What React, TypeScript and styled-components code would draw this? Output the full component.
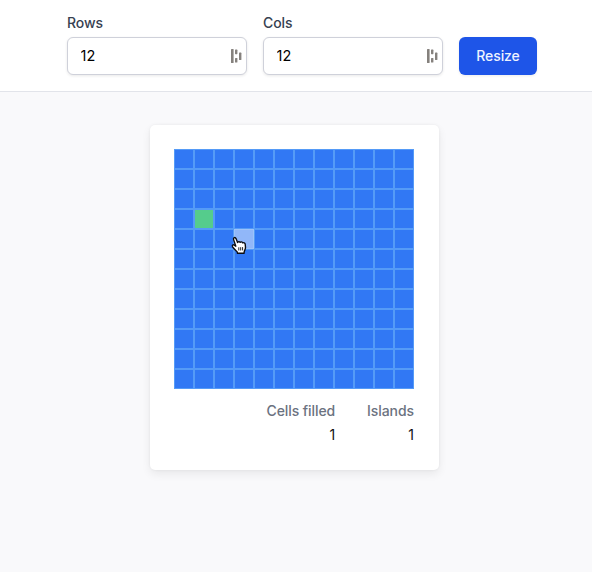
import React from "react";
import styled, { createGlobalStyle } from "styled-components";

const GlobalStyle = createGlobalStyle`
  *, *::before, *::after { box-sizing: border-box; }
  body {
    margin: 0;
    background: #f9f9fb;
    color: #161e2e;
    font-family: Inter, sans-serif;
    -webkit-font-smoothing: antialiased;
  }
`;

const Page = styled.div`
  display: flex;
  flex-direction: column;
  align-items: center;
  height: 572px;
  overflow: hidden;
`;

const Toolbar = styled.form`
  display: flex;
  align-items: flex-end;
  gap: 16px;
  width: 100%;
  height: 92px;
  padding: 0 55px 16px 67px;
  background: #fff;
  border-bottom: 1px solid #e2e4ea;
`;

const Field = styled.label`
  display: flex;
  flex-direction: column;
  gap: 4px;
  width: 180px;
`;

const FieldLabel = styled.span`
  font-size: 14px;
  font-weight: 500;
  line-height: 20px;
  letter-spacing: -0.08px;
  color: #374151;
`;

const InputBox = styled.span`
  display: flex;
  align-items: center;
  height: 38px;
  padding: 0 2px 0 12.5px;
  background: #fff;
  border: 1px solid #cfd1da;
  border-radius: 6px;
  box-shadow: 0 1px 3px rgba(0, 0, 0, 0.09);
`;

const NumberInput = styled.input`
  flex: 1;
  min-width: 0;
  padding: 0;
  border: 0;
  outline: 0;
  background: transparent;
  font: 400 14.5px/20px Inter, sans-serif;
  color: #000;
`;

const ResizeButton = styled.button`
  width: 78px;
  height: 38px;
  padding: 0;
  border: 0;
  border-radius: 6px;
  background: #1e55e8;
  color: #eef3ff;
  font: 500 14px/20px Inter, sans-serif;
  letter-spacing: -0.08px;
  box-shadow: 0 1px 3px rgba(0, 0, 0, 0.08);
`;

const Card = styled.main`
  margin: 33px 4px 0 0;
  width: 289px;
  height: 345px;
  padding: 24px 24px 24px 24.5px;
  background: #fff;
  border-radius: 5px;
  box-shadow: 0 4px 10px rgba(0, 0, 0, 0.07), 0 0 3px rgba(0, 0, 0, 0.06);
`;

const Board = styled.div`
  display: grid;
  grid-template-columns: repeat(12, 20px);
  grid-auto-rows: 20px;
`;

type CellState = "water" | "land" | "hover";

const cellColors: Record<CellState, string> = {
  water: "#3178f4",
  land: "#55cc8c",
  hover: "#91b7f9",
};

const Cell = styled.div<{ $state: CellState }>`
  position: relative;
  background: ${(p) => cellColors[p.$state]};
  border: 1px solid ${(p) => (p.$state === "hover" ? "#9dc3fa" : "#559bf7")};
`;

const Pointer = styled.svg`
  position: absolute;
  left: -4px;
  top: 6px;
  z-index: 1;
`;

const Stats = styled.dl`
  display: flex;
  justify-content: flex-end;
  gap: 32px;
  width: 240px;
  margin: 12px 0 0;
  font-size: 14px;
  line-height: 20px;
  text-align: right;
`;

const StatLabel = styled.dt`
  font-weight: 500;
  letter-spacing: -0.08px;
  color: #6b7280;
`;

const StatValue = styled.dd`
  margin: 4px 0 0;
  color: #111;
`;

function BarsIcon() {
  return (
    <svg width="14" height="16" viewBox="0 0 14 16" fill="#85817d">
      <rect x="1" y="1" width="2.6" height="14" rx="0.6" />
      <rect x="5" y="1.6" width="2.4" height="4.6" rx="0.6" />
      <rect x="5" y="10" width="2.4" height="4.6" rx="0.6" />
      <rect x="9" y="4.6" width="2.4" height="7.4" rx="0.6" />
    </svg>
  );
}

function HandPointer() {
  return (
    <Pointer width="16" height="19" viewBox="0 0 16 19">
      <path
        d="M4.8 10.2 2.6 3.6C2 1.4 4.2 .8 5 2.6L6.6 6.5C7 5.3 8.8 5.4 9.2 6.4 9.9 5.5 11.3 5.8 11.7 6.9 12.7 6.3 14 6.9 14.2 8.2L14.5 11.2C14.6 13.3 13.5 14.2 13.2 15.8L13.1 17.3H6.5L6.2 15.9C4.7 14.1 2.9 12.8 1.6 10.8 .7 9.1 2.2 8.3 3.3 9.2Z"
        fill="#fff"
        stroke="#0b0d12"
        strokeWidth="1.4"
        strokeLinejoin="round"
      />
      <path d="M7.8 11.3v3.2M9.7 11.2v3.3M11.6 11.1v3.3" stroke="#0b0d12" strokeWidth="0.9" />
    </Pointer>
  );
}

function DimensionField({ label }: { label: string }) {
  return (
    <Field>
      <FieldLabel>{label}</FieldLabel>
      <InputBox>
        <NumberInput defaultValue="12" />
        <BarsIcon />
      </InputBox>
    </Field>
  );
}

const COLS = 12;
const LAND = 3 * COLS + 1;
const HOVERED = 4 * COLS + 3;

function stateOf(index: number): CellState {
  if (index === LAND) return "land";
  return index === HOVERED ? "hover" : "water";
}

export default function App() {
  return (
    <Page>
      <GlobalStyle />
      <Toolbar>
        <DimensionField label="Rows" />
        <DimensionField label="Cols" />
        <ResizeButton type="button">Resize</ResizeButton>
      </Toolbar>
      <Card>
        <Board>
          {Array.from({ length: COLS * COLS }, (_, i) => (
            <Cell key={i} $state={stateOf(i)}>
              {i === HOVERED && <HandPointer />}
            </Cell>
          ))}
        </Board>
        <Stats>
          <div>
            <StatLabel>Cells filled</StatLabel>
            <StatValue>1</StatValue>
          </div>
          <div>
            <StatLabel>Islands</StatLabel>
            <StatValue>1</StatValue>
          </div>
        </Stats>
      </Card>
    </Page>
  );
}
